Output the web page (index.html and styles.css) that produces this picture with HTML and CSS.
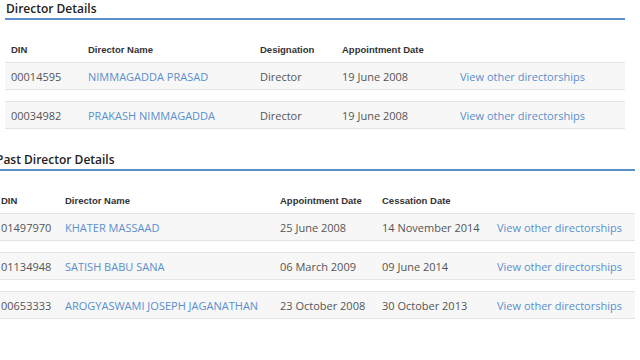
FILE: index.html
```html
<!DOCTYPE html>
<html>
<head>
<meta charset="utf-8">
<link rel="stylesheet" href="styles.css">
</head>
<body>
<section class="block block-current">
  <h2 class="block-title">Director Details</h2>
  <div class="grid-table">
    <div class="trow thead">
      <div>DIN</div><div>Director Name</div><div>Designation</div><div>Appointment Date</div><div></div>
    </div>
    <div class="tbody">
      <div class="trow">
        <div>00014595</div><div><a href="#">NIMMAGADDA PRASAD</a></div><div>Director</div><div>19 June 2008</div><div><a href="#">View other directorships</a></div>
      </div>
      <div class="trow">
        <div>00034982</div><div><a href="#">PRAKASH NIMMAGADDA</a></div><div>Director</div><div>19 June 2008</div><div><a href="#">View other directorships</a></div>
      </div>
    </div>
  </div>
</section>
<section class="block block-past">
  <h2 class="block-title">Past Director Details</h2>
  <div class="grid-table">
    <div class="trow thead">
      <div>DIN</div><div>Director Name</div><div>Appointment Date</div><div>Cessation Date</div><div></div>
    </div>
    <div class="tbody">
      <div class="trow">
        <div>01497970</div><div><a href="#">KHATER MASSAAD</a></div><div>25 June 2008</div><div>14 November 2014</div><div><a href="#">View other directorships</a></div>
      </div>
      <div class="trow">
        <div>01134948</div><div><a href="#">SATISH BABU SANA</a></div><div>06 March 2009</div><div>09 June 2014</div><div><a href="#">View other directorships</a></div>
      </div>
      <div class="trow">
        <div>00653333</div><div><a href="#">AROGYASWAMI JOSEPH JAGANATHAN</a></div><div>23 October 2008</div><div>30 October 2013</div><div><a href="#">View other directorships</a></div>
      </div>
    </div>
  </div>
</section>
</body>
</html>
```
FILE: styles.css
```css
html, body {
  margin: 0;
  padding: 0;
  background: #ffffff;
  overflow: hidden;
}
body {
  font-family: "Open Sans", "Liberation Sans", sans-serif;
  font-size: 11px;
  color: #555555;
}
.block-current {
  width: 620px;
  margin-left: 5px;
}
.block-past {
  width: 640px;
  margin-left: -5px;
  margin-top: 22px;
}
.block-title {
  margin: 0;
  padding-left: 1px;
  font-size: 12px;
  line-height: 18px;
  font-weight: 600;
  color: #222222;
  border-bottom: 2px solid #5b8fca;
}
.grid-table {
  margin-top: 15px;
}
.trow {
  display: grid;
  align-items: center;
}
.block-current .trow {
  grid-template-columns: 77px 172px 82px 118px 1fr;
}
.block-past .trow {
  grid-template-columns: 64px 215px 102px 115px 1fr;
}
.trow > div {
  padding-left: 6px;
  white-space: nowrap;
}
.thead {
  height: 27px;
  padding-top: 2px;
  box-sizing: border-box;
  font-family: "Liberation Sans", Arial, sans-serif;
  font-weight: bold;
  font-size: 9.5px;
  color: #333333;
}
.tbody {
  display: flex;
  flex-direction: column;
  gap: 11px;
}
.tbody .trow {
  height: 26px;
  background: #f7f7f7;
  border-top: 1px solid #e4e4e4;
  border-bottom: 1px solid #e4e4e4;
}
a {
  color: #5a8fcc;
  text-decoration: none;
}
```
